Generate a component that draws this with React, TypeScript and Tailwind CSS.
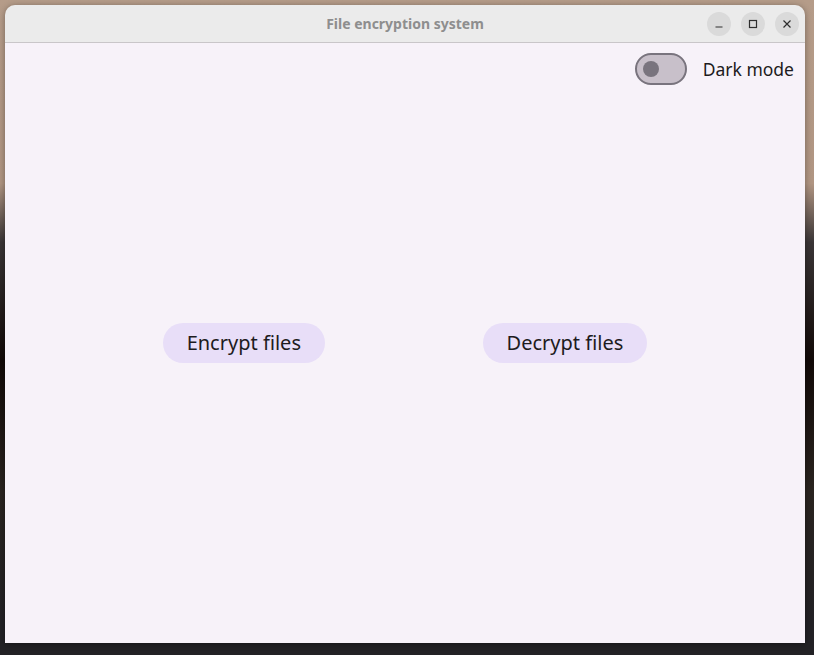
import React, { useState } from 'react'

const TitleButton = ({ children }: { children: React.ReactNode }) => (
  <div className="w-6 h-6 rounded-full bg-[#dadada] grid place-items-center text-[#2e2e2e]">
    {children}
  </div>
)

export default function App() {
  const [dark, setDark] = useState(false)

  return (
    <div className="w-[814px] h-[655px] pt-[5px] pl-[5px] bg-[linear-gradient(180deg,#b59c89_0%,#b09582_28%,#3a3536_37%,#120a08_55%,#2a2420_75%,#222125_95%)]">
      <div className="w-[800px] h-[638px] flex flex-col rounded-t-[10px] overflow-hidden shadow-[0_1px_6px_rgba(0,0,0,0.35)]">
        {/* Title bar */}
        <div className="h-[38px] bg-[#ebebeb] border-b border-[#c9c6c9] flex items-center relative">
          <h1 className="flex-1 text-center text-[14px] font-bold text-[#8e8e8e] font-['Noto_Sans',sans-serif]">
            File encryption system
          </h1>
          <div className="absolute right-[6px] top-[7px] flex gap-[10px]">
            <TitleButton>
              <svg width="10" height="10" viewBox="0 0 10 10"><path d="M1.5 8h7" stroke="currentColor" strokeWidth="1.2" /></svg>
            </TitleButton>
            <TitleButton>
              <svg width="10" height="10" viewBox="0 0 10 10"><rect x="1.5" y="1.5" width="7" height="7" fill="none" stroke="currentColor" strokeWidth="1.2" /></svg>
            </TitleButton>
            <TitleButton>
              <svg width="10" height="10" viewBox="0 0 10 10"><path d="M1.5 1.5l7 7M8.5 1.5l-7 7" stroke="currentColor" strokeWidth="1.2" /></svg>
            </TitleButton>
          </div>
        </div>

        {/* Content */}
        <div className="flex-1 bg-[#f7f2f9] flex flex-col font-['Noto_Sans',sans-serif] text-[#1d1b20]">
          <div className="flex items-center justify-end gap-4 pt-[10px] pr-[11px]">
            <button
              onClick={() => setDark(!dark)}
              className="w-[52px] h-[32px] rounded-full border-2 border-[#79747e] bg-[#c8c0ca] flex items-center px-[6px]"
            >
              <span className="w-4 h-4 rounded-full bg-[#79747e]" />
            </button>
            <span className="text-[17.5px]">Dark mode</span>
          </div>
          <div className="flex-1 flex items-center justify-evenly pb-[42px]">
            <button className="h-10 px-6 rounded-full bg-[#e8def8] text-[20px] text-[#1d1b20]">Encrypt files</button>
            <button className="h-10 px-6 rounded-full bg-[#e8def8] text-[20px] text-[#1d1b20]">Decrypt files</button>
          </div>
        </div>
      </div>
    </div>
  )
}
